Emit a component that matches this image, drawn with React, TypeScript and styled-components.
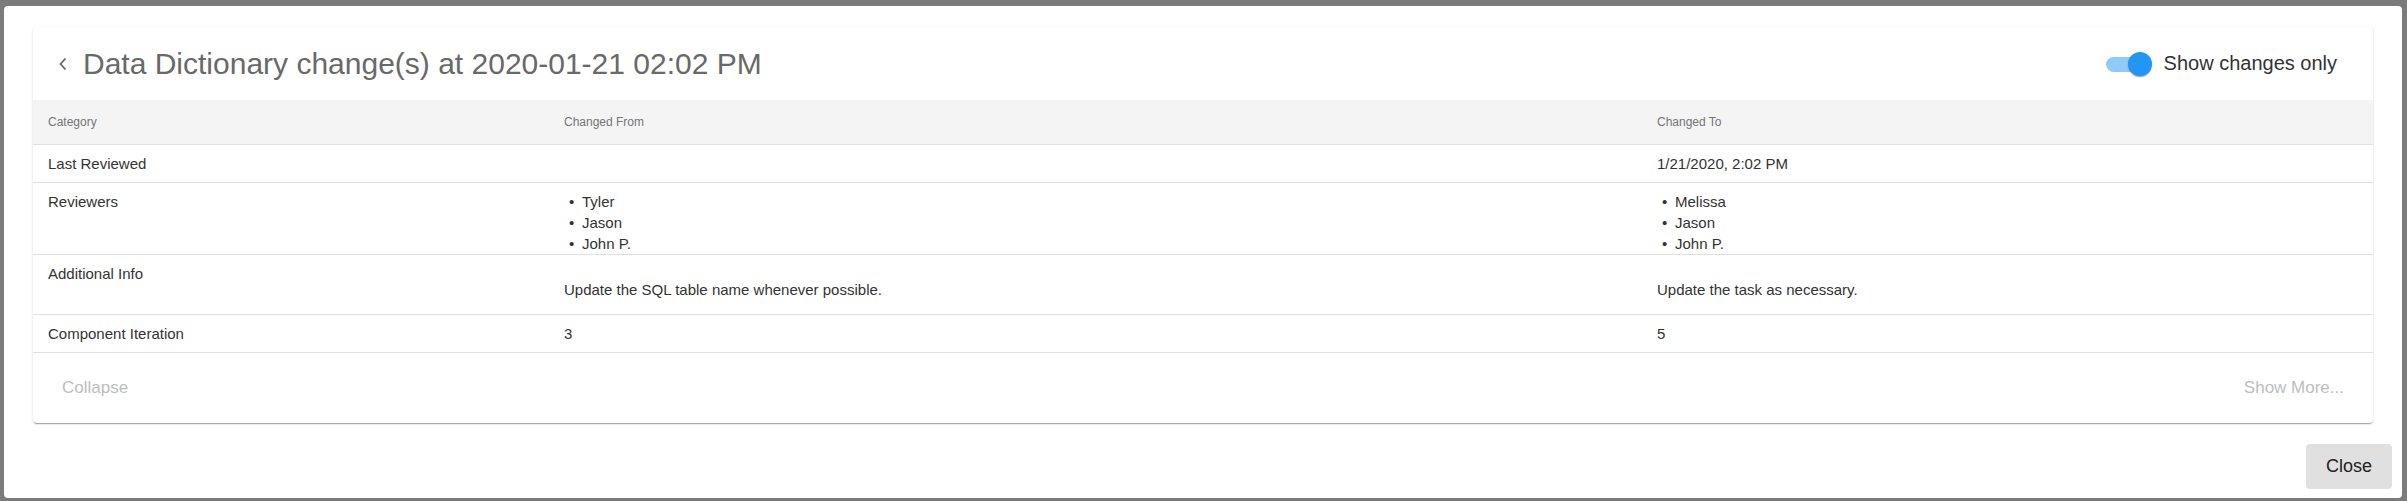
import React from "react";
import styled, { createGlobalStyle } from "styled-components";

const GlobalStyle = createGlobalStyle`
  html, body {
    margin: 0;
    padding: 0;
  }
  body {
    background: #7b7b7b;
    font-family: "Liberation Sans", Arial, Helvetica, sans-serif;
  }
`;

const Backdrop = styled.div`
  width: 2407px;
  height: 501px;
  box-sizing: border-box;
  padding: 6px 5px 3px 4px;
  background: #7b7b7b;
`;

const Dialog = styled.div`
  height: 100%;
  box-sizing: border-box;
  background: #fff;
  border-radius: 4px;
  padding-top: 21px;
  display: flex;
  flex-direction: column;
`;

const Card = styled.div`
  margin: 0 29px;
  background: #fff;
  border-radius: 4px;
  box-shadow: 0 2px 1px -1px rgba(0, 0, 0, 0.2), 0 1px 1px 0 rgba(0, 0, 0, 0.14),
    0 1px 3px 0 rgba(0, 0, 0, 0.12);
  overflow: hidden;
`;

const CardHeader = styled.div`
  height: 73px;
  display: flex;
  align-items: center;
  padding: 0 36px 0 26px;
`;

const BackButton = styled.button`
  border: 0;
  background: none;
  padding: 0;
  margin-right: 16px;
  display: flex;
  cursor: pointer;
`;

const Title = styled.h2`
  flex: 1;
  margin: 0;
  font-size: 30px;
  font-weight: 400;
  color: #696969;
`;

const ToggleLabel = styled.label`
  display: flex;
  align-items: center;
  gap: 12px;
  font-size: 20px;
  color: #333;
  cursor: pointer;
`;

const Switch = styled.span`
  position: relative;
  width: 46px;
  height: 24px;
  flex-shrink: 0;
`;

const Track = styled.span<{ $on: boolean }>`
  position: absolute;
  left: 0;
  top: 5px;
  width: 40px;
  height: 15px;
  border-radius: 8px;
  background: ${(p) => (p.$on ? "#90caf9" : "#bdbdbd")};
`;

const Thumb = styled.span<{ $on: boolean }>`
  position: absolute;
  top: 0;
  left: ${(p) => (p.$on ? "22px" : "0")};
  width: 24px;
  height: 24px;
  border-radius: 50%;
  background: ${(p) => (p.$on ? "#2196f3" : "#fafafa")};
  box-shadow: 0 2px 1px -1px rgba(0, 0, 0, 0.2), 0 1px 1px 0 rgba(0, 0, 0, 0.14),
    0 1px 3px 0 rgba(0, 0, 0, 0.12);
`;

const Row = styled.div<{ $head?: boolean }>`
  display: grid;
  grid-template-columns: 516px 1093px 1fr;
  border-bottom: 1px solid #e0e0e0;
  background: ${(p) => (p.$head ? "#f4f4f4" : "#fff")};
  ${(p) => (p.$head ? "height: 44px; align-items: center;" : "")}
`;

const HeadCell = styled.div`
  padding: 0 15px;
  font-size: 12px;
  color: #757575;
`;

const Cell = styled.div<{ $flush?: boolean }>`
  padding: 8px 15px ${(p) => (p.$flush ? "0" : "8px")};
  font-size: 15px;
  line-height: 21px;
  color: #333;
`;

const Note = styled.p`
  margin: 16px 0 6px;
`;

const List = styled.ul`
  margin: 0;
  padding: 0;
  list-style: none;
`;

const Item = styled.li`
  &::before {
    content: "•";
    display: inline-block;
    width: 13px;
    margin-left: 5px;
  }
`;

const CardFooter = styled.div`
  height: 70px;
  display: flex;
  align-items: center;
  justify-content: space-between;
  padding: 0 29px;
`;

const LinkButton = styled.button`
  border: 0;
  background: none;
  padding: 0;
  font-family: inherit;
  font-size: 17px;
  color: #bdbdbd;
  cursor: pointer;
`;

const Actions = styled.div`
  display: flex;
  justify-content: flex-end;
  padding: 21px 10px 0;
`;

const CloseButton = styled.button`
  width: 86px;
  height: 45px;
  border: 0;
  border-radius: 4px;
  background: #e0e0e0;
  font-family: inherit;
  font-size: 18px;
  color: #222;
  cursor: pointer;
`;

const Chevron = () => (
  <svg width="8" height="14" viewBox="0 0 8 14">
    <polyline
      points="6.5,1.5 1.5,7 6.5,12.5"
      fill="none"
      stroke="#666"
      strokeWidth="1.8"
    />
  </svg>
);

type Change = {
  category: string;
  from: React.ReactNode;
  to: React.ReactNode;
  kind?: "list" | "note";
};

const changes: Change[] = [
  { category: "Last Reviewed", from: "", to: "1/21/2020, 2:02 PM" },
  {
    category: "Reviewers",
    from: ["Tyler", "Jason", "John P."],
    to: ["Melissa", "Jason", "John P."],
    kind: "list",
  },
  {
    category: "Additional Info",
    from: "Update the SQL table name whenever possible.",
    to: "Update the task as necessary.",
    kind: "note",
  },
  { category: "Component Iteration", from: "3", to: "5" },
];

const Value = ({ value, kind }: { value: React.ReactNode; kind?: Change["kind"] }) => {
  if (kind === "list" && Array.isArray(value)) {
    return (
      <Cell $flush>
        <List>
          {value.map((v) => (
            <Item key={v}>{v}</Item>
          ))}
        </List>
      </Cell>
    );
  }
  if (kind === "note") {
    return (
      <Cell>
        <Note>{value}</Note>
      </Cell>
    );
  }
  return <Cell>{value}</Cell>;
};

export default function App() {
  const [changesOnly, setChangesOnly] = React.useState(true);
  return (
    <>
      <GlobalStyle />
      <Backdrop>
        <Dialog>
          <Card>
            <CardHeader>
              <BackButton aria-label="Back">
                <Chevron />
              </BackButton>
              <Title>Data Dictionary change(s) at 2020-01-21 02:02 PM</Title>
              <ToggleLabel onClick={() => setChangesOnly(!changesOnly)}>
                <Switch>
                  <Track $on={changesOnly} />
                  <Thumb $on={changesOnly} />
                </Switch>
                Show changes only
              </ToggleLabel>
            </CardHeader>
            <Row $head>
              <HeadCell>Category</HeadCell>
              <HeadCell>Changed From</HeadCell>
              <HeadCell>Changed To</HeadCell>
            </Row>
            {changes.map((c) => (
              <Row key={c.category}>
                <Cell>{c.category}</Cell>
                <Value value={c.from} kind={c.kind} />
                <Value value={c.to} kind={c.kind} />
              </Row>
            ))}
            <CardFooter>
              <LinkButton>Collapse</LinkButton>
              <LinkButton>Show More...</LinkButton>
            </CardFooter>
          </Card>
          <Actions>
            <CloseButton>Close</CloseButton>
          </Actions>
        </Dialog>
      </Backdrop>
    </>
  );
}
